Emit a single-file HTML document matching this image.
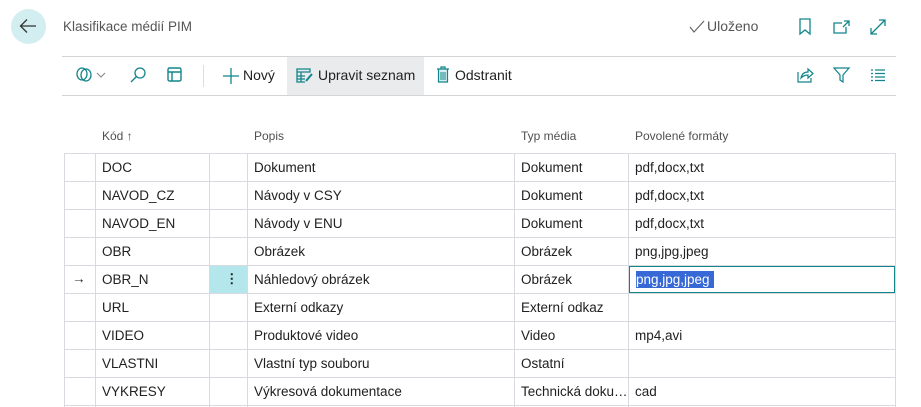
<!DOCTYPE html>
<html><head><meta charset="utf-8"><style>
*{box-sizing:border-box;margin:0;padding:0}
body{width:921px;height:407px;overflow:hidden;background:#fff;font-family:"Liberation Sans",sans-serif;color:#212121;position:relative;font-size:13.5px}
.a{position:absolute}
.hl{position:absolute;background:#d4d4d4;height:1px}
.t{position:absolute;white-space:nowrap}
.vl{position:absolute;width:1px;background:#d8dae0}
.rl{position:absolute;height:1px;background:#d8dae0;left:64px;width:832px}
svg{position:absolute}
</style></head><body>
<div class="a" style="left:11px;top:9px;width:35px;height:35px;border-radius:50%;background:#d3eef0"></div>
<svg style="left:17px;top:15px" width="22" height="22" viewBox="0 0 22 22"><path d="M19 11H4M10 4.5 3.5 11 10 17.5" fill="none" stroke="#333" stroke-width="1.3"/></svg>
<div class="t" style="left:63px;top:19px;color:#555;font-size:13.5px">Klasifikace médií PIM</div>
<svg style="left:689px;top:20px" width="16" height="14"><path d="M1 7 5 12 15 1" fill="none" stroke="#666" stroke-width="1.2"/></svg>
<div class="t" style="left:707px;top:18px;color:#555;font-size:14px">Uloženo</div>
<svg style="left:798px;top:18px" width="14" height="18"><path d="M2 1H12V16L7 12 2 16Z" fill="none" stroke="#12858a" stroke-width="1.3"/></svg>
<svg style="left:832px;top:18px" width="20" height="18"><path d="M10 5H2V15H14V9M12 3H17V8M17 3 11 9" fill="none" stroke="#12858a" stroke-width="1.3"/></svg>
<svg style="left:869px;top:18px" width="18" height="18"><path d="M2 16 16 2M10 2H16V8M2 10V16H8" fill="none" stroke="#12858a" stroke-width="1.3"/></svg>
<div class="hl" style="left:62px;top:56px;width:834px"></div>
<div class="hl" style="left:62px;top:95px;width:834px"></div>
<svg style="left:75px;top:66px" width="36" height="18"><ellipse cx="7" cy="8" rx="5" ry="6" fill="none" stroke="#12858a" stroke-width="1.3"/><ellipse cx="11" cy="9" rx="5" ry="6" fill="none" stroke="#12858a" stroke-width="1.3"/><path d="M22 7 26 11 30 7" fill="none" stroke="#888" stroke-width="1.1"/></svg>
<svg style="left:129px;top:66px" width="18" height="18"><circle cx="11" cy="7" r="5" fill="none" stroke="#12858a" stroke-width="1.3"/><path d="M7.5 10.5 2 16" stroke="#12858a" stroke-width="1.3"/></svg>
<svg style="left:166px;top:66px" width="18" height="18"><rect x="2" y="2" width="13" height="13" rx="1.5" fill="none" stroke="#12858a" stroke-width="1.4"/><path d="M2 6H15M6 6V15" stroke="#12858a" stroke-width="1.4"/></svg>
<div class="vl" style="left:203px;top:65px;height:22px;background:#ddd"></div>
<svg style="left:222px;top:67px" width="18" height="18"><path d="M9 1V17M1 9H17" stroke="#12858a" stroke-width="1.3"/></svg>
<div class="t" style="left:243px;top:67px;font-size:14px">Nový</div>
<div class="a" style="left:287px;top:57px;width:137px;height:38px;background:#eaebed"></div>
<svg style="left:296px;top:68px" width="18" height="16"><path d="M1 1H14V4H1ZM1 4V14H9M5 4V14M1 8H9M1 11H9" fill="none" stroke="#12858a" stroke-width="1.3"/><path d="M10 13 16 6" stroke="#12858a" stroke-width="2"/></svg>
<div class="t" style="left:318px;top:67px;font-size:14px">Upravit seznam</div>
<svg style="left:436px;top:66px" width="14" height="18"><path d="M1 3H13M5 3V1H9V3M2.5 3.5V16H11.5V3.5" fill="#d8eef0" stroke="#12858a" stroke-width="1.2"/><path d="M5 6V14M7 6V14M9 6V14" stroke="#12858a"/></svg>
<div class="t" style="left:455px;top:67px;font-size:14px">Odstranit</div>
<svg style="left:796px;top:66px" width="18" height="18"><path d="M2 6V16H15V12M5 12C6 7 9 6 12 6V3L17 7.5 12 12V9C9 9 7 10 5 12Z" fill="none" stroke="#12858a" stroke-width="1.2"/></svg>
<svg style="left:833px;top:66px" width="18" height="18"><path d="M1 2H16L10 9V16L7 14V9Z" fill="none" stroke="#12858a" stroke-width="1.2"/></svg>
<svg style="left:870px;top:68px" width="16" height="14"><path d="M1 2H3M5 2H15M1 5.5H3M5 5.5H15M1 9H3M5 9H15M1 12.5H3M5 12.5H15" stroke="#12858a" stroke-width="1.2"/></svg>
<div class="t" style="left:102px;top:129px;font-size:12px;color:#505050">Kód ↑</div>
<div class="t" style="left:254px;top:129px;font-size:12px;color:#505050">Popis</div>
<div class="t" style="left:521px;top:129px;font-size:12px;color:#505050">Typ média</div>
<div class="t" style="left:635px;top:129px;font-size:12px;color:#505050">Povolené formáty</div>
<div class="a" style="left:210px;top:266px;width:37px;height:27px;background:#b3e7ec"></div>
<div class="t" style="left:225px;top:271px;font-weight:bold">⋮</div>
<div class="t" style="left:72px;top:271px">→</div>
<div class="vl" style="left:64px;top:153px;height:254px"></div>
<div class="vl" style="left:95px;top:153px;height:254px"></div>
<div class="vl" style="left:209px;top:153px;height:254px"></div>
<div class="vl" style="left:247px;top:153px;height:254px"></div>
<div class="vl" style="left:514px;top:153px;height:254px"></div>
<div class="vl" style="left:628px;top:153px;height:254px"></div>
<div class="vl" style="left:895px;top:153px;height:254px"></div>
<div class="rl" style="top:153px"></div><div class="rl" style="top:181px"></div><div class="rl" style="top:209px"></div><div class="rl" style="top:237px"></div><div class="rl" style="top:265px"></div><div class="rl" style="top:293px"></div><div class="rl" style="top:321px"></div><div class="rl" style="top:349px"></div><div class="rl" style="top:377px"></div><div class="rl" style="top:405px"></div>
<div class="a" style="left:629px;top:266px;width:266px;height:27px;border:1px solid #12858a;background:#fff"></div>
<div class="a" style="left:636px;top:271px;width:78px;height:17px;background:#3668d6"></div>
<div class="t" style="left:102px;top:160px">DOC</div><div class="t" style="left:254px;top:160px">Dokument</div><div class="t" style="left:521px;top:160px">Dokument</div><div class="t" style="left:635px;top:160px">pdf,docx,txt</div>
<div class="t" style="left:102px;top:188px">NAVOD_CZ</div><div class="t" style="left:254px;top:188px">Návody v CSY</div><div class="t" style="left:521px;top:188px">Dokument</div><div class="t" style="left:635px;top:188px">pdf,docx,txt</div>
<div class="t" style="left:102px;top:216px">NAVOD_EN</div><div class="t" style="left:254px;top:216px">Návody v ENU</div><div class="t" style="left:521px;top:216px">Dokument</div><div class="t" style="left:635px;top:216px">pdf,docx,txt</div>
<div class="t" style="left:102px;top:244px">OBR</div><div class="t" style="left:254px;top:244px">Obrázek</div><div class="t" style="left:521px;top:244px">Obrázek</div><div class="t" style="left:635px;top:244px">png,jpg,jpeg</div>
<div class="t" style="left:102px;top:272px">OBR_N</div><div class="t" style="left:254px;top:272px">Náhledový obrázek</div><div class="t" style="left:521px;top:272px">Obrázek</div><div class="t" style="left:636px;top:272px;color:#fff">png,jpg,jpeg</div>
<div class="t" style="left:102px;top:300px">URL</div><div class="t" style="left:254px;top:300px">Externí odkazy</div><div class="t" style="left:521px;top:300px">Externí odkaz</div>
<div class="t" style="left:102px;top:328px">VIDEO</div><div class="t" style="left:254px;top:328px">Produktové video</div><div class="t" style="left:521px;top:328px">Video</div><div class="t" style="left:635px;top:328px">mp4,avi</div>
<div class="t" style="left:102px;top:356px">VLASTNI</div><div class="t" style="left:254px;top:356px">Vlastní typ souboru</div><div class="t" style="left:521px;top:356px">Ostatní</div>
<div class="t" style="left:102px;top:384px">VYKRESY</div><div class="t" style="left:254px;top:384px">Výkresová dokumentace</div><div class="t" style="left:521px;top:384px">Technická doku…</div><div class="t" style="left:635px;top:384px">cad</div>
</body></html>
